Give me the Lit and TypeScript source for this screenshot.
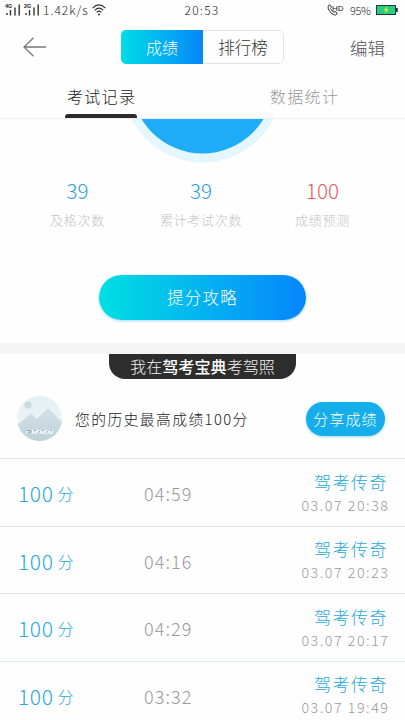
import { LitElement, html, css } from "lit";
import { customElement, property } from "lit/decorators.js";

interface ExamRecord {
  score: string;
  duration: string;
  rank: string;
  date: string;
}

const RECORDS: ExamRecord[] = [
  { score: "100", duration: "04:59", rank: "驾考传奇", date: "03.07 20:38" },
  { score: "100", duration: "04:16", rank: "驾考传奇", date: "03.07 20:23" },
  { score: "100", duration: "04:29", rank: "驾考传奇", date: "03.07 20:17" },
  { score: "100", duration: "03:32", rank: "驾考传奇", date: "03.07 19:49" },
];

@customElement("status-bar")
class StatusBar extends LitElement {
  static styles = css`
    :host { display: grid; grid-template-columns: 1fr auto 1fr; align-items: center; height: 20px; padding: 0 7px 0 5px; font-size: 12px; line-height: 20px; color: #222; }
    .side { display: flex; align-items: center; height: 20px; }
    .right { justify-content: flex-end; }
    svg { display: block; flex: none; }
    .net { font-size: 5.5px; font-weight: 700; font-family: "Liberation Sans", sans-serif; }
    .second { margin-left: 2px; }
    .hd { font-size: 8px; font-family: "Liberation Sans", sans-serif; }
    .speed { margin-left: 2px; letter-spacing: 1px; width: 49px; }
    .clock { margin-left: 1px; letter-spacing: 1.3px; }
    .level { font-size: 11px; margin: 0 6px 0 6px; width: 20px; letter-spacing: -0.4px; white-space: nowrap; }
  `;
  private signal(net: string) {
    return html`<svg width="17" height="14" viewBox="0 0 17 14">
      <text class="net" x="0" y="5" fill="#222">${net}</text>
      <path d="M2 10v2M5.5 7v5.5M10 4.5v8M14.2 1.5v11" stroke="#333" stroke-width="1.4" fill="none" />
    </svg>`;
  }
  render() {
    return html`
      <div class="side">
        ${this.signal("4G")}
        <div class="second">${this.signal("2G")}</div>
        <span class="speed">1.42k/s</span>
        <svg width="14" height="12" viewBox="0 0 14 12" fill="none" stroke="#333" stroke-width="1.1">
          <path d="M.6 4.2Q7-2.4 13.4 4.2M2.7 6.3Q7 2 11.3 6.3M4.6 8.4Q7 5.8 9.4 8.4" />
          <circle cx="7" cy="10.4" r="1" fill="#333" stroke="none" />
        </svg>
      </div>
      <span class="clock">20:53</span>
      <div class="side right">
        <svg width="17" height="14" viewBox="0 0 17 14">
          <path d="M1.2 3.2Q2.2 1.3 3.2 2.1L4.4 4.2Q4.2 5 3.5 5.5Q4.6 8 6.8 9.2L8 8.5L10 10Q10.3 11.5 8.4 12.2Q3.8 11.5 1.2 6Z" fill="none" stroke="#333" stroke-width="1" />
          <text class="hd" x="5" y="7.5" fill="#222">HD</text>
        </svg>
        <span class="level">95%</span>
        <svg width="22" height="10" viewBox="0 0 22 10">
          <rect x=".5" y=".5" width="19" height="9" fill="#25ce82" stroke="#333" />
          <rect x="20" y="3" width="1.8" height="4" fill="#333" />
          <path d="M11.5 1.2L7.5 5.5H10L8.8 8.8L13 4.5H10.5Z" fill="#e9e72c" />
        </svg>
      </div>
    `;
  }
}

@customElement("record-row")
class RecordRow extends LitElement {
  @property({ attribute: false }) record!: ExamRecord;
  static styles = css`
    :host { display: grid; grid-template-columns: 126px 1fr auto; align-items: center; height: 67.5px; box-sizing: border-box; padding: 0 17px 0 18px; border-bottom: 1px solid #e3e8e8; white-space: nowrap; }
    .score { display: flex; align-items: center; gap: 4px; color: #27a9db; font-size: 16px; line-height: 28px; padding-top: 2px; }
    .points { font-size: 21px; letter-spacing: 0.6px; }
    .duration { font-size: 18px; line-height: 26px; letter-spacing: 1.1px; color: #999; padding-top: 2px; }
    .meta { display: flex; flex-direction: column; align-items: flex-end; }
    .rank { color: #27a9db; font-size: 17px; line-height: 25px; letter-spacing: 1.5px; }
    .date { color: #999; font-size: 14.2px; line-height: 22px; letter-spacing: 1.55px; margin-right: -1.5px; }
  `;
  render() {
    const r = this.record;
    return html`
      <div class="score"><span class="points">${r.score}</span><span>分</span></div>
      <div class="duration">${r.duration}</div>
      <div class="meta"><div class="rank">${r.rank}</div><div class="date">${r.date}</div></div>
    `;
  }
}

@customElement("app-root")
class AppRoot extends LitElement {
  static styles = css`
    :host { display: flex; flex-direction: column; width: 405px; height: 720px; overflow: hidden; background: #fefefe; font-family: "Noto Sans CJK SC", sans-serif; font-weight: 300; color: #333; white-space: nowrap; }
    svg { display: block; }
    .nav { display: grid; grid-template-columns: 121px 163px 1fr; height: 54px; align-items: center; flex: none; }
    .back { margin-left: 22px; }
    .switch { display: grid; grid-template-columns: 82px 1fr; height: 34px; border-radius: 5px; box-sizing: border-box; overflow: hidden; font-size: 16px; line-height: 34px; text-align: center; }
    .on { background: linear-gradient(90deg, #00dde4, #0786fb); color: #fff; }
    .off { border: 1px solid #e4e4e4; border-left: 0; border-radius: 0 5px 5px 0; font-size: 16.5px; line-height: 32px; }
    .edit { justify-self: end; margin-right: 20px; font-size: 17.5px; color: #555; }
    .tabs { display: flex; justify-content: space-between; height: 45px; box-sizing: border-box; padding: 0 65px; border-bottom: 1px solid #eee; flex: none; font-size: 16px; line-height: 44px; letter-spacing: 1.3px; }
    .tab { height: 45px; box-sizing: border-box; padding-left: 2px; width: 72px; color: #999; }
    .tab.active { color: #222; }
    .tab.active::after { content: ""; display: block; height: 4px; margin: -4px 0 0 -2px; background: #2b2b2b; border-radius: 3px 3px 0 0; }
    .dial { height: 45px; flex: none; }
    .stats { display: grid; grid-template-columns: 155px 92px 151px; height: 69px; margin-top: 11px; flex: none; text-align: center; }
    .value { font-size: 20.5px; line-height: 31px; color: #2b9fd9; }
    .value.red { color: #e25d5d; }
    .label { font-size: 13px; line-height: 28px; letter-spacing: 0.7px; color: #c4c4c4; }
    .cta { width: 207px; height: 45px; margin: 31px 0 0 99px; border-radius: 23px; background: linear-gradient(90deg, #00dfe2, #0786fd); box-shadow: 0 1px 3px #9edcf0; color: #fff; font-size: 16.5px; line-height: 44px; letter-spacing: 1.2px; text-align: center; flex: none; }
    .band { height: 11px; margin-top: 23px; background: #f5f5f5; flex: none; }
    .ribbon { align-self: center; width: 187px; height: 25px; border-radius: 0 0 16px 16px; background: #2d2d2d; color: #eee; font-size: 16.1px; line-height: 24px; text-align: center; flex: none; }
    .ribbon b { font-weight: 500; color: #fff; }
    .best { display: grid; grid-template-columns: 58px 1fr 79px; height: 80px; padding: 0 20px 0 17px; box-sizing: border-box; align-items: center; border-bottom: 1px solid #dfe1e1; flex: none; }
    .best-text { font-size: 14.8px; letter-spacing: 1.4px; color: #222; }
    .share { height: 34px; border-radius: 17px; background: #15aeea; box-shadow: 0 1px 3px #a5d9ef; color: #fff; font-size: 15px; line-height: 34px; letter-spacing: 1.1px; text-align: center; }
    record-row { flex: none; }
  `;
  render() {
    return html`
      <status-bar></status-bar>
      <div class="nav">
        <svg class="back" width="26" height="20" viewBox="0 0 26 20" fill="none" stroke="#777" stroke-width="1.3">
          <path d="M24 10H2M11.5 .8L2 10L11.5 19.2" />
        </svg>
        <div class="switch"><div class="on">成绩</div><div class="off">排行榜</div></div>
        <div class="edit">编辑</div>
      </div>
      <div class="tabs"><div class="tab active">考试记录</div><div class="tab">数据统计</div></div>
      <svg class="dial" width="405" height="45" viewBox="0 119 405 45">
        <circle cx="202.5" cy="82.5" r="80" fill="#e5f7fe" />
        <circle cx="202.5" cy="82.5" r="71" fill="#1eabf8" />
      </svg>
      <div class="stats">
        <div><div class="value">39</div><div class="label">及格次数</div></div>
        <div><div class="value">39</div><div class="label">累计考试次数</div></div>
        <div><div class="value red">100</div><div class="label">成绩预测</div></div>
      </div>
      <div class="cta">提分攻略</div>
      <div class="band"></div>
      <div class="ribbon">我在<b>驾考宝典</b>考驾照</div>
      <div class="best">
        <svg width="45" height="45" viewBox="0 0 45 45">
          <defs>
            <clipPath id="disc"><circle cx="22.5" cy="22.5" r="22.5" /></clipPath>
            <linearGradient id="sky" x2="0" y2="1"><stop stop-color="#e3f0f3" /><stop offset="1" stop-color="#f1f7f8" /></linearGradient>
            <linearGradient id="hill" x2="0" y2="1"><stop stop-color="#d3e1e6" /><stop offset="1" stop-color="#bdd1d9" /></linearGradient>
          </defs>
          <g clip-path="url(#disc)">
            <rect width="45" height="45" fill="url(#sky)" />
            <circle cx="11" cy="9" r="3.6" fill="#cbdce1" />
            <path d="M0 29L14 17.5L20 22.5L31 12L45 26V45H0Z" fill="url(#hill)" />
            <path d="M9 35.8H36" stroke="#e9f2f5" stroke-width="4" />
            <path d="M9.5 34.5h3v2.5h-2M14 34v3.5M17 34.5h2M21 37.5l2-3M25 34.5h2M29 37l2-2.5M33 34.5h2" stroke="#6d8d99" stroke-width=".8" fill="none" />
          </g>
        </svg>
        <div class="best-text">您的历史最高成绩100分</div>
        <div class="share">分享成绩</div>
      </div>
      ${RECORDS.map((r) => html`<record-row .record=${r}></record-row>`)}
    `;
  }
}
